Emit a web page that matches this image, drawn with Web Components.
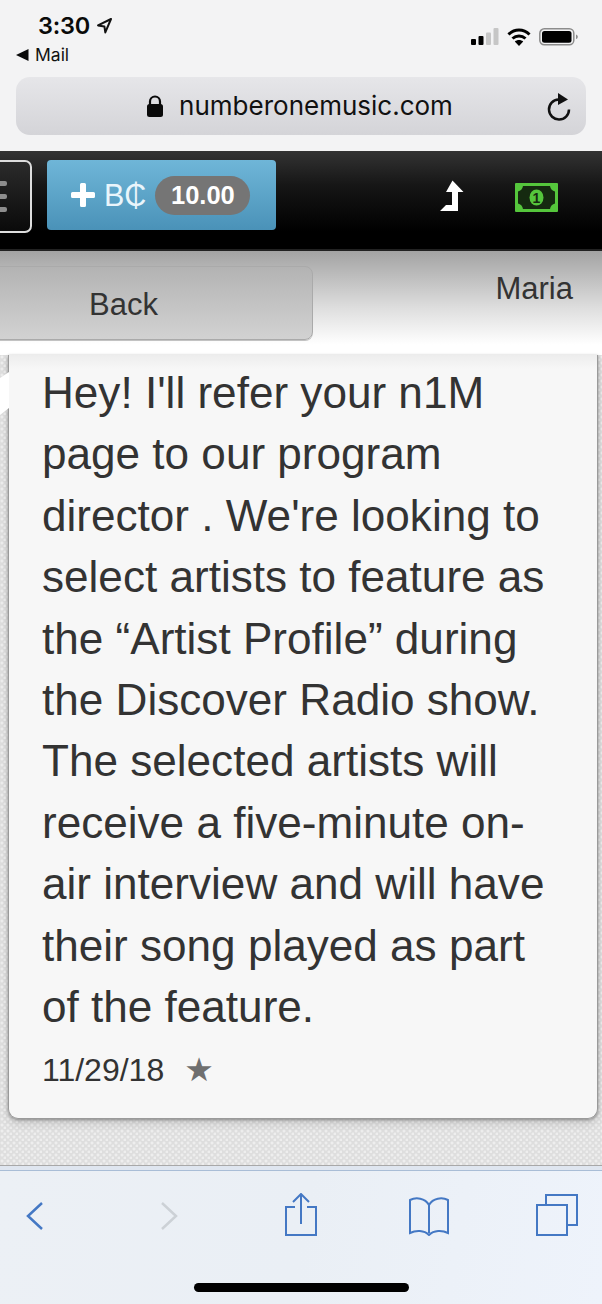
<!DOCTYPE html>
<html>
<head>
<meta charset="utf-8">
<style>
  html, body { margin: 0; padding: 0; }
  body { width: 602px; height: 1304px; overflow: hidden; font-family: "Liberation Sans", Arial, sans-serif; }
  app-screen { width: 602px; height: 1304px; }
</style>
</head>
<body>
<app-screen>
  <browser-top slot="top" url="numberonemusic.com"></browser-top>
  <nav-bar slot="top" amount="10.00"></nav-bar>
  <sub-header slot="top" name="Maria"></sub-header>
  <message-card date="11/29/18">Hey! I'll refer your n1M page to our program director . We're looking to select artists to feature as the “Artist Profile” during the Discover Radio show. The selected artists will receive a five-minute on-air interview and will have their song played as part of the feature.</message-card>
  <safari-toolbar slot="bottom"></safari-toolbar>
</app-screen>

<script>
class AppScreen extends HTMLElement {
  constructor() {
    super();
    this.attachShadow({ mode: 'open' }).innerHTML = `
    <style>
      :host { display: flex; flex-direction: column; overflow: hidden; }
      .content {
        flex: 1;
        min-height: 0;
        background-color: #dedede;
        background-image:
          radial-gradient(circle at 2px 2px, #eeeeee 1.2px, transparent 1.8px),
          radial-gradient(circle at 5px 5px, #eeeeee 1.2px, transparent 1.8px);
        background-size: 6px 6px;
      }
    </style>
    <slot name="top"></slot>
    <div class="content"><slot></slot></div>
    <slot name="bottom"></slot>`;
  }
}

class BrowserTop extends HTMLElement {
  constructor() {
    super();
    this.attachShadow({ mode: 'open' }).innerHTML = `
    <style>
      :host { display: block; height: 151px; background: #f3f3f4; color: #0a0a0a; box-sizing: border-box; padding: 12px 16px 0; }
      .status { display: flex; justify-content: space-between; height: 27px; }
      .time { display: flex; align-items: center; gap: 6px; margin-left: 22px; font: 600 23.500px/27px "Inter", "Liberation Sans", sans-serif; letter-spacing: -.2px; }
      .signals { display: flex; align-items: center; gap: 8px; margin-top: 16px; height: 18px; margin-right: 8px; }
      .back { display: flex; align-items: center; gap: 6px; height: 18px; margin-top: 7px; font: 17.500px/18px "Inter", "Liberation Sans", sans-serif; color: #111; }
      .url {
        display: flex; align-items: center; justify-content: center; position: relative;
        height: 58px; margin-top: 13px; width: 570px; border-radius: 14px;
        background: linear-gradient(#e6e6e9, #d4d4d8);
        font: 26px/30px "Inter", "Liberation Sans", sans-serif; color: #111;
      }
      .addr { display: flex; align-items: center; gap: 15px; margin-left: -3px; }
      .reload { position: absolute; right: 14px; top: 15px; }
    </style>
    <div class="status">
      <div class="time">3:30
        <svg width="17" height="17" viewBox="0 0 17 17" fill="none" stroke="#111" stroke-width="2" stroke-linejoin="round"><path d="M15 2 2 8.400l6.400 1 .9 6z"/></svg>
      </div>
      <div class="signals">
        <svg width="28" height="18" viewBox="0 0 28 18"><rect x="0" y="11" width="5" height="6" rx="1" fill="#000"/><rect x="7.500" y="8" width="5" height="9" rx="1" fill="#000"/><rect x="15" y="4.500" width="5" height="12.500" rx="1" fill="#c6c6c6"/><rect x="22.500" y="0" width="5" height="17" rx="1" fill="#c6c6c6"/></svg>
        <svg width="24" height="18" viewBox="0 0 24 18" fill="none" stroke="#000" stroke-width="3"><path d="M1.500 6.500C7.500 .6 16.500 .6 22.500 6.500"/><path d="M5.500 10.500c3.800-3.500 9.200-3.500 13 0"/><path d="M12 18 7.800 13.500c2.500-2 5.900-2 8.400 0z" fill="#000" stroke="none"/></svg>
        <svg width="39" height="18" viewBox="0 0 39 18"><rect x=".8" y=".8" width="34" height="16" rx="4.500" fill="none" stroke="#8c8c8c" stroke-width="1.500"/><rect x="3" y="3" width="29.500" height="11.700" rx="2.500" fill="#000"/><path d="M37 6.500c1.300.4 1.800 1.300 1.800 2.300S38.300 10.700 37 11.100z" fill="#8c8c8c"/></svg>
      </div>
    </div>
    <div class="back">
      <svg width="13" height="12" viewBox="0 0 13 12"><path d="M12.500 0v12L0 6z" fill="#0a0a0a"/></svg>
      <span>Mail</span>
    </div>
    <div class="url">
      <div class="addr">
        <svg width="18" height="23" viewBox="0 0 18 23"><path d="M4 10V6.500a5 5 0 0 1 10 0V10" fill="none" stroke="#0a0a0a" stroke-width="2.200"/><rect x="1" y="9" width="16" height="13" rx="2.500" fill="#0a0a0a"/></svg>
        <span>${this.getAttribute('url')}</span>
      </div>
      <svg class="reload" width="26" height="30" viewBox="0 0 26 30" fill="none"><path d="M12.500 7.500a10 10 0 1 0 10.500 10" stroke="#111" stroke-width="2.500"/><path d="M12 1 22 7.500 12 13z" fill="#111"/></svg>
    </div>`;
  }
}

class NavBar extends HTMLElement {
  constructor() {
    super();
    this.attachShadow({ mode: 'open' }).innerHTML = `
    <style>
      :host {
        display: flex; align-items: flex-start; height: 100px; box-sizing: border-box;
        background: linear-gradient(#333, #161616 35%, #000 82%);
        border-bottom: 2px solid #222;
        padding-top: 9px; overflow: hidden;
      }
      .menu {
        flex: none; box-sizing: border-box; width: 41px; height: 73px; margin-left: -9px;
        border: 2px solid #ddd; border-radius: 7px; background: linear-gradient(#2b2b2b, #0a0a0a);
        display: flex; flex-direction: column; justify-content: center; gap: 8px; align-items: flex-end;
      }
      .menu i { display: block; width: 16px; height: 5px; border-radius: 2px; background: #8d8d8d; margin-right: 23px; }
      .credit {
        flex: none; display: flex; align-items: center; box-sizing: border-box;
        width: 229px; height: 70px; margin-left: 15px; padding-left: 23px;
        border-radius: 4px; background: linear-gradient(#6fb6d8, #4a92b8);
        color: #fff;
      }
      .bc { font: 30.500px/36px "Liberation Sans", sans-serif; margin-left: 8px; color: #e9f5fb; }
      .pill {
        margin-left: 9px; width: 95px; height: 39px; border-radius: 20px; background: #757575;
        font: bold 25.500px/39px "Liberation Sans", sans-serif; text-align: center;
      }
      .icons { flex: 1; display: flex; justify-content: flex-end; align-items: flex-start; }
      .up { margin-top: 20px; margin-right: 51px; }
      .cash { margin-top: 23px; margin-right: 44px; }
      .cash text { font: bold 14px "Liberation Sans", sans-serif; fill: #152a10; }
    </style>
    <div class="menu"><i></i><i></i><i></i></div>
    <div class="credit">
      <svg width="26" height="26" viewBox="0 0 26 26"><path d="M10 2.500a1.500 1.500 0 0 1 1.500-1.500h3A1.500 1.500 0 0 1 16 2.500V10h7.500a1.500 1.500 0 0 1 1.500 1.500v3a1.500 1.500 0 0 1-1.500 1.500H16v7.500a1.500 1.500 0 0 1-1.500 1.500h-3a1.500 1.500 0 0 1-1.500-1.500V16H2.500A1.500 1.500 0 0 1 1 14.500v-3A1.500 1.500 0 0 1 2.500 10H10z" fill="#fff"/></svg>
      <span class="bc">B₵</span>
      <span class="pill">${this.getAttribute('amount')}</span>
    </div>
    <div class="icons">
      <svg class="up" width="24" height="32" viewBox="0 0 24 32"><path d="M12.500 .5 23.500 12H18v19H0l6-6h6V12H6z" fill="#fff"/></svg>
      <svg class="cash" width="43" height="29" viewBox="0 0 43 29"><rect width="43" height="29" rx="1" fill="#55c63c"/><path d="M8 3h27c.4 3 2.500 5 5 5.500v12c-2.500.5-4.600 2.500-5 5.500H8c-.4-3-2.500-5-5-5.500v-12C5.500 8 7.600 6 8 3z" fill="#152a10"/><ellipse cx="21.500" cy="14.500" rx="7" ry="8" fill="#55c63c"/><text x="21.500" y="19.500" text-anchor="middle">1</text></svg>
    </div>`;
  }
}

class SubHeader extends HTMLElement {
  constructor() {
    super();
    this.attachShadow({ mode: 'open' }).innerHTML = `
    <style>
      :host {
        display: flex; justify-content: space-between; height: 104px; box-sizing: border-box; padding-top: 15px;
        background: linear-gradient(#a3a3a3, #dedede 55%, #fff 90%);
        font: 31px/36px "Liberation Sans", sans-serif; color: #333;
      }
      .back {
        box-sizing: border-box; width: 325px; height: 74px; margin-left: -12px;
        border: 1px solid #aaa; border-radius: 8px;
        background: linear-gradient(#b3b3b3, #d2d2d2);
        box-shadow: 0 1px 0 #c2c2c2;
        padding-left: 100px; line-height: 75px;
      }
      .name { margin-right: 29px; margin-top: 5px; }
    </style>
    <div class="back">Back</div>
    <div class="name">${this.getAttribute('name')}</div>`;
  }
}

class MessageCard extends HTMLElement {
  constructor() {
    super();
    this.attachShadow({ mode: 'open' }).innerHTML = `
    <style>
      :host { display: block; position: relative; margin: 0 4px 0 8px; }
      .box {
        box-sizing: border-box; height: 764px; padding: 7px 44px 0 33px;
        background: linear-gradient(#ededed, #f7f7f7 14px);
        border: 1px solid #9a9a9a; border-top: 0;
        border-radius: 0 0 10px 10px; box-shadow: 0 1px 3px #8a8a8a, 0 5px 10px rgba(0, 0, 0, .12);
        color: #333;
      }
      .text { font: 44.100px/61.400px "Liberation Sans", sans-serif; }
      .meta { display: flex; align-items: center; gap: 20px; margin-top: 15px; font: 32px/36px "Liberation Sans", sans-serif; }
      .star { color: #6f6f6f; font: 33px/36px "DejaVu Sans", sans-serif; }
      .tip { position: absolute; left: -8px; top: 17px; width: 9px; height: 44px; }
    </style>
    <div class="box">
      <div class="text"><slot></slot></div>
      <div class="meta"><span>${this.getAttribute('date')}</span><span class="star">★</span></div>
    </div>
    <svg class="tip" viewBox="0 0 9 44"><path d="M9 0 0 6v37l9-7z" fill="#fff"/></svg>`;
  }
}

class SafariToolbar extends HTMLElement {
  constructor() {
    super();
    this.attachShadow({ mode: 'open' }).innerHTML = `
    <style>
      :host {
        display: block; height: 134px; box-sizing: border-box; position: relative;
        background: linear-gradient(100deg, #ecf0f5, #eaeff5 50%, #eef3fb);
        border-top: 1px solid #a9bdd6; box-shadow: 0 -4px 0 #dfe6f0, 0 -5px 0 #a8a8a8;
      }
      .row { display: grid; grid-template-columns: 134px 126px 124px 128px 42px; align-items: start; padding: 22px 0 0 24px; }
      svg { display: block; fill: none; stroke: #4478c4; stroke-width: 2; }
      .home { position: absolute; left: 194px; bottom: 12px; width: 215px; height: 9px; border-radius: 5px; background: #000; }
    </style>
    <div class="row">
      <svg width="22" height="32" viewBox="0 0 22 32" style="margin-top:7px"><path d="M18 3 4 16l14 13" stroke-width="2.500"/></svg>
      <svg width="22" height="32" viewBox="0 0 22 32" style="margin-top:7px;stroke:#ccd1d6"><path d="M4 3l14 13L4 29" stroke-width="2.500"/></svg>
      <svg width="34" height="44" viewBox="0 0 34 44"><path d="M11 14H2v28h30V14h-9M17 31V2M9 9l8-8 8 8"/></svg>
      <svg width="42" height="40" viewBox="0 0 42 40" style="margin-top:3px"><path d="M21 37V9C17 2 8 1 2 4v33c6-3 14-3 19 2 5-5 13-5 19-2V4C34 1 25 2 21 9"/></svg>
      <svg width="42" height="42" viewBox="0 0 42 42" style="margin-top:1px"><rect x="1" y="11" width="30" height="30"/><path d="M10 11V1h31v30h-10"/></svg>
    </div>
    <div class="home"></div>`;
  }
}

customElements.define('app-screen', AppScreen);
customElements.define('browser-top', BrowserTop);
customElements.define('nav-bar', NavBar);
customElements.define('sub-header', SubHeader);
customElements.define('message-card', MessageCard);
customElements.define('safari-toolbar', SafariToolbar);
</script>
</body>
</html>
